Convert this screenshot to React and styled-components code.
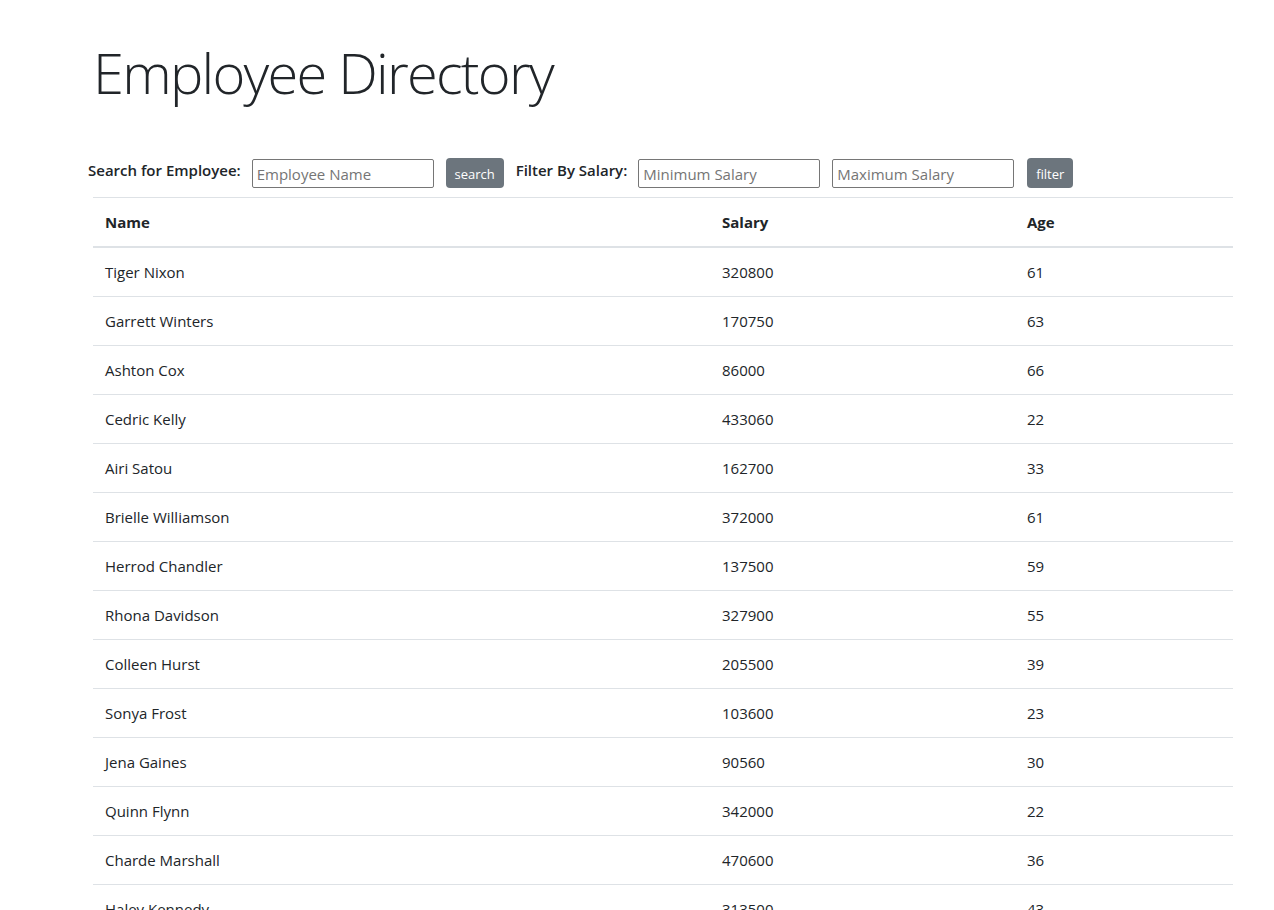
import React from "react";
import styled, { createGlobalStyle } from "styled-components";

const employees = [
  { name: "Tiger Nixon", salary: 320800, age: 61 },
  { name: "Garrett Winters", salary: 170750, age: 63 },
  { name: "Ashton Cox", salary: 86000, age: 66 },
  { name: "Cedric Kelly", salary: 433060, age: 22 },
  { name: "Airi Satou", salary: 162700, age: 33 },
  { name: "Brielle Williamson", salary: 372000, age: 61 },
  { name: "Herrod Chandler", salary: 137500, age: 59 },
  { name: "Rhona Davidson", salary: 327900, age: 55 },
  { name: "Colleen Hurst", salary: 205500, age: 39 },
  { name: "Sonya Frost", salary: 103600, age: 23 },
  { name: "Jena Gaines", salary: 90560, age: 30 },
  { name: "Quinn Flynn", salary: 342000, age: 22 },
  { name: "Charde Marshall", salary: 470600, age: 36 },
  { name: "Haley Kennedy", salary: 313500, age: 43 },
  { name: "Tatyana Fitzpatrick", salary: 385750, age: 19 },
  { name: "Michael Silva", salary: 198500, age: 66 },
];

const GlobalStyle = createGlobalStyle`
  body {
    margin: 0;
    background: #fff;
    color: #212529;
    font-family: "Open Sans", "Noto Sans", sans-serif;
    font-size: 16px;
    line-height: 1.5;
  }
`;

const Page = styled.div`
  padding: 39px 41px 0 93px;
`;

const Title = styled.h1`
  margin: 0 0 52px;
  font-size: 56px;
  font-weight: 300;
  line-height: 67px;
  letter-spacing: -1.75px;
`;

const Toolbar = styled.div`
  display: flex;
  align-items: center;
  margin-left: -5px;
  height: 30px;
  margin-bottom: 9px;
`;

const Label = styled.label`
  font-size: 15px;
  font-weight: 600;
  margin-right: 11px;
  position: relative;
  top: -3px;
`;

const Input = styled.input`
  box-sizing: border-box;
  width: 182px;
  height: 29px;
  border: 1px solid #767676;
  border-radius: 2px;
  padding: 2px 4px 0;
  font-family: inherit;
  font-size: 15px;
  color: #212529;
  margin-right: ${(p) => p.$gap || 12}px;
  &::placeholder {
    color: #757575;
  }
`;

const Button = styled.button`
  box-sizing: border-box;
  height: 30px;
  width: ${(p) => p.$w}px;
  border: none;
  border-radius: 4px;
  background: #6c757d;
  color: #fff;
  font-family: inherit;
  font-size: 13px;
  padding: 2px 0 0;
  margin-right: 12px;
  cursor: pointer;
`;

const Table = styled.table`
  width: 100%;
  border-collapse: collapse;
  border-top: 1px solid #dee2e6;
`;

const Th = styled.th`
  text-align: left;
  font-size: 15px;
  line-height: 24px;
  font-weight: 700;
  padding: 12px;
  border-bottom: 2px solid #dee2e6;
  width: ${(p) => p.$w || "auto"};
`;

const Td = styled.td`
  padding: 12px;
  font-size: 15px;
  line-height: 24px;
  border-top: 1px solid #dee2e6;
`;

function App() {
  return (
    <Page>
      <GlobalStyle />
      <Title>Employee Directory</Title>
      <Toolbar>
        <Label>Search for Employee:</Label>
        <Input placeholder="Employee Name" />
        <Button $w={58}>search</Button>
        <Label>Filter By Salary:</Label>
        <Input placeholder="Minimum Salary" />
        <Input placeholder="Maximum Salary" $gap={13} />
        <Button $w={46}>filter</Button>
      </Toolbar>
      <Table>
        <thead>
          <tr>
            <Th $w="593px">Name</Th>
            <Th $w="281px">Salary</Th>
            <Th>Age</Th>
          </tr>
        </thead>
        <tbody>
          {employees.map((e) => (
            <tr key={e.name}>
              <Td>{e.name}</Td>
              <Td>{e.salary}</Td>
              <Td>{e.age}</Td>
            </tr>
          ))}
        </tbody>
      </Table>
    </Page>
  );
}

export default App;
